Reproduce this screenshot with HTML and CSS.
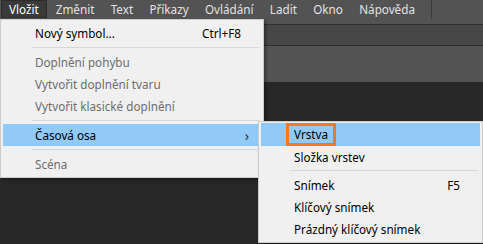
FILE: index.html
```html
<!DOCTYPE html>
<html lang="cs">
<head>
<meta charset="utf-8">
<link rel="stylesheet" href="styles.css">
</head>
<body>
<div class="app">
  <div class="menubar">
    <span class="mb-item active">Vložit</span>
    <span class="mb-item">Změnit</span>
    <span class="mb-item">Text</span>
    <span class="mb-item">Příkazy</span>
    <span class="mb-item">Ovládání</span>
    <span class="mb-item">Ladit</span>
    <span class="mb-item">Okno</span>
    <span class="mb-item">Nápověda</span>
    <span class="mb-sep"></span>
  </div>
  <div class="toolbar"></div>
  <div class="panel-strip"></div>
  <div class="stage"></div>

  <div class="menu main-menu">
    <div class="mi"><span class="label">Nový symbol...</span><span class="key">Ctrl+F8</span></div>
    <div class="sep"></div>
    <div class="mi disabled"><span class="label">Doplnění pohybu</span></div>
    <div class="mi disabled"><span class="label">Vytvořit doplnění tvaru</span></div>
    <div class="mi disabled"><span class="label">Vytvořit klasické doplnění</span></div>
    <div class="sep"></div>
    <div class="mi hover"><span class="label">Časová osa</span><span class="arrow">›</span></div>
    <div class="sep"></div>
    <div class="mi disabled"><span class="label">Scéna</span></div>
  </div>

  <div class="menu sub-menu">
    <div class="mi hover"><span class="boxed">Vrstva</span></div>
    <div class="mi"><span class="label">Složka vrstev</span></div>
    <div class="sep"></div>
    <div class="mi"><span class="label">Snímek</span><span class="key">F5</span></div>
    <div class="mi"><span class="label">Klíčový snímek</span></div>
    <div class="mi"><span class="label">Prázdný klíčový snímek</span></div>
  </div>
</div>
</body>
</html>
```

FILE: styles.css
```css
* { box-sizing: border-box; }
html, body { margin: 0; padding: 0; }
body {
  width: 483px;
  height: 244px;
  overflow: hidden;
  background: #282828;
  font-family: "Noto Sans", "Open Sans", sans-serif;
  font-size: 11.7px;
}
.app {
  position: relative;
  width: 483px;
  height: 244px;
  display: flex;
  flex-direction: column;
}
.menubar {
  height: 25px;
  background: #535353;
  border-bottom: 1px solid #2f2f2f;
  display: flex;
  align-items: flex-start;
  padding-left: 1px;
  color: #e2e2e2;
}
.mb-item {
  height: 18px;
  line-height: 16px;
  padding: 0 7px;
  margin-right: 0.3px;
  border: 1px solid transparent;
}
.mb-item.active {
  background: #3a3a3a;
  border-color: #2c2c2c;
  color: #ffffff;
  margin-right: 1px;
}
.mb-sep {
  margin-left: 8px;
  width: 1px;
  height: 19px;
  background: #3a3a3a;
}
.toolbar {
  height: 21px;
  background: #474747;
  border-bottom: 1px solid #2f2f2f;
}
.panel-strip {
  height: 36px;
  background: #535353;
}
.stage {
  flex: 1;
  background: #282828;
}

.menu {
  position: absolute;
  background: #f0f0f0;
  border: 1px solid #cccccc;
  padding: 2px;
  box-shadow: 2px 2px 3px rgba(0,0,0,0.35);
  color: #000;
}
.main-menu {
  left: 0;
  top: 19px;
  width: 264px;
  height: 159px;
}
.sub-menu {
  left: 258px;
  top: 121px;
  width: 225px;
  height: 122px;
  padding-top: 1px;
}
.mi {
  height: 22px;
  display: flex;
  align-items: center;
  padding-left: 32px;
  padding-right: 20px;
  white-space: nowrap;
}
.mi .label { flex: 1; }
.mi.disabled { color: #6d6d6d; }
.mi.hover { background: #91c9f7; }
.key { flex: 0 0 auto; }
.arrow {
  font-size: 14px;
  margin-right: -8px;
  color: #333;
}
.sep {
  height: 1px;
  background: #d7d7d7;
  margin: 3px 2px 3px 29px;
}
.sub-menu .mi { padding-left: 33px; }
.sub-menu .mi.hover { height: 23px; }
.sub-menu .mi:nth-child(2) { height: 21px; }
.boxed {
  flex: 0 0 auto;
  margin-left: -8px;
  padding: 0 5px;
  height: 23px;
  line-height: 17px;
  border: 3px solid #f47920;
}
```
